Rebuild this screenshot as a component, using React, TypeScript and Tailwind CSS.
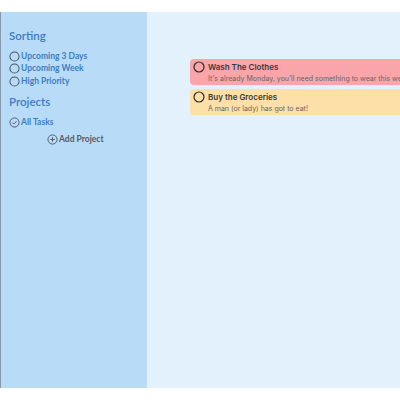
import React from "react";

const Circle = () => (
  <svg width="11" height="11" viewBox="0 0 24 24" fill="none" stroke="#4b5563" strokeWidth="2.2" className="shrink-0">
    <circle cx="12" cy="12" r="10" />
  </svg>
);

const CheckCircle = () => (
  <svg width="11" height="11" viewBox="0 0 24 24" fill="none" stroke="#4b5563" strokeWidth="2" className="shrink-0">
    <circle cx="12" cy="12" r="10" />
    <path d="M7.5 12.5l3 3 6-6.5" />
  </svg>
);

const PlusCircle = () => (
  <svg width="11" height="11" viewBox="0 0 24 24" fill="none" stroke="#4b5563" strokeWidth="2" className="shrink-0">
    <circle cx="12" cy="12" r="10" />
    <path d="M12 7v10M7 12h10" />
  </svg>
);

const TaskCircle = () => (
  <svg width="12" height="12" viewBox="0 0 24 24" fill="none" stroke="#2d2d2d" strokeWidth="2.4" className="shrink-0">
    <circle cx="12" cy="12" r="10" />
  </svg>
);

export default function App() {
  const sorting = ["Upcoming 3 Days", "Upcoming Week", "High Priority"];
  const tasks = [
    { title: "Wash The Clothes", desc: "It's already Monday, you'll need something to wear this week!", bg: "bg-[#f9a5a9]" },
    { title: "Buy the Groceries", desc: "A man (or lady) has got to eat!", bg: "bg-[#fde0a7]" },
  ];
  return (
    <div className="w-[400px] h-[400px] bg-white overflow-hidden" style={{ fontFamily: "Lato, 'Open Sans', sans-serif" }}>
      <div className="mt-[12px] h-[376px] flex">
        <div className="w-[147px] bg-[#b8dcf7] border-l border-[#8a9bb0] pl-[8px] pt-[17px]">
          <div className="text-[11.5px] font-semibold text-[#3b7bc6] leading-[14px]">Sorting</div>
          <div className="mt-[7px] flex flex-col">
            {sorting.map((s) => (
              <div key={s} className="flex items-center gap-[1px] h-[12.5px]">
                <Circle />
                <span className="text-[8.5px] font-bold text-[#3d7cc2]">{s}</span>
              </div>
            ))}
          </div>
          <div className="mt-[7px] text-[11.5px] font-semibold text-[#3b7bc6] leading-[14px]">Projects</div>
          <div className="mt-[8px] flex items-center gap-[1px] h-[12px]">
            <CheckCircle />
            <span className="text-[8.5px] font-bold text-[#3d7cc2]">All Tasks</span>
          </div>
          <div className="mt-[5px] ml-[38px] flex items-center gap-[1px] h-[12px]">
            <PlusCircle />
            <span className="text-[8.5px] font-bold text-[#555b66]">Add Project</span>
          </div>
        </div>
        <div className="flex-1 bg-[#e3f1fc] pt-[47px] pl-[43px] overflow-hidden">
          <div className="flex flex-col gap-[4px] w-[300px]">
            {tasks.map((t) => (
              <div key={t.title} className={`${t.bg} rounded-[4px] h-[26px] pl-[3px] pt-[2px]`}>
                <div className="flex items-center gap-[3px]">
                  <TaskCircle />
                  <span className="text-[8px] font-semibold text-[#3a3a3a] leading-[12px]" style={{ fontFamily: "Inter, sans-serif" }}>{t.title}</span>
                </div>
                <div className="pl-[15px] text-[7px] text-[#6e6466] leading-[11px] whitespace-nowrap" style={{ fontFamily: "Inter, sans-serif" }}>{t.desc}</div>
              </div>
            ))}
          </div>
        </div>
      </div>
    </div>
  );
}
